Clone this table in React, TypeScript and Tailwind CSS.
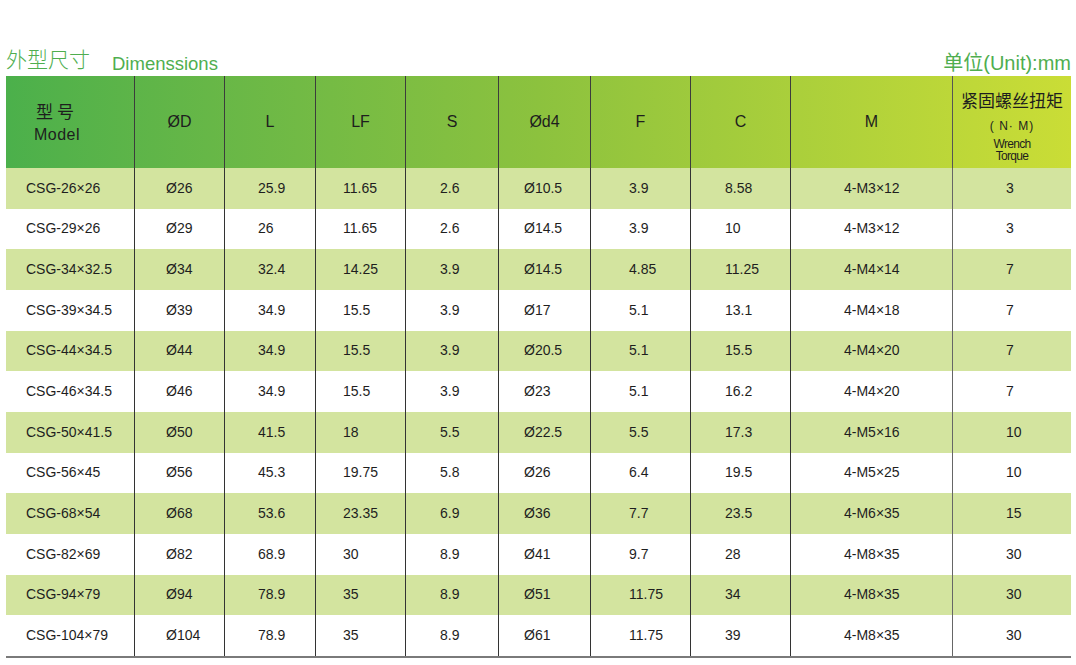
const cols = "grid grid-cols-[128px_90px_91px_90px_93px_92px_100px_100px_162px_119px]";

const pads = [
  "pl-[20px]",
  "pl-[31px]",
  "pl-[33px]",
  "pl-[27px]",
  "pl-[34px]",
  "pl-[25px]",
  "pl-[38px]",
  "pl-[34px]",
  "pl-[53px]",
  "pl-[53px]",
];

const rows: string[][] = [
  ["CSG-26×26", "Ø26", "25.9", "11.65", "2.6", "Ø10.5", "3.9", "8.58", "4-M3×12", "3"],
  ["CSG-29×26", "Ø29", "26", "11.65", "2.6", "Ø14.5", "3.9", "10", "4-M3×12", "3"],
  ["CSG-34×32.5", "Ø34", "32.4", "14.25", "3.9", "Ø14.5", "4.85", "11.25", "4-M4×14", "7"],
  ["CSG-39×34.5", "Ø39", "34.9", "15.5", "3.9", "Ø17", "5.1", "13.1", "4-M4×18", "7"],
  ["CSG-44×34.5", "Ø44", "34.9", "15.5", "3.9", "Ø20.5", "5.1", "15.5", "4-M4×20", "7"],
  ["CSG-46×34.5", "Ø46", "34.9", "15.5", "3.9", "Ø23", "5.1", "16.2", "4-M4×20", "7"],
  ["CSG-50×41.5", "Ø50", "41.5", "18", "5.5", "Ø22.5", "5.5", "17.3", "4-M5×16", "10"],
  ["CSG-56×45", "Ø56", "45.3", "19.75", "5.8", "Ø26", "6.4", "19.5", "4-M5×25", "10"],
  ["CSG-68×54", "Ø68", "53.6", "23.35", "6.9", "Ø36", "7.7", "23.5", "4-M6×35", "15"],
  ["CSG-82×69", "Ø82", "68.9", "30", "8.9", "Ø41", "9.7", "28", "4-M8×35", "30"],
  ["CSG-94×79", "Ø94", "78.9", "35", "8.9", "Ø51", "11.75", "34", "4-M8×35", "30"],
  ["CSG-104×79", "Ø104", "78.9", "35", "8.9", "Ø61", "11.75", "39", "4-M8×35", "30"],
];

const heads = ["ØD", "L", "LF", "S", "Ød4", "F", "C", "M"];

const sans = "font-['Liberation_Sans','Noto_Sans_CJK_SC',sans-serif]";

export default function App() {
  return (
    <div className={`w-[1076px] h-[665px] bg-white ${sans} text-[#1e1e1e] overflow-hidden`}>
      <div className="mx-[6px] w-[1065px] pt-[44px]">
        {/* title line */}
        <div className="flex items-end justify-between h-[32px] text-[#4fae4f]">
          <div className="flex items-end">
            <span className="text-[21px] leading-none mb-[6px] font-light">外型尺寸</span>
            <span className="ml-[22px] text-[18.5px] leading-none mb-[3px]">Dimenssions</span>
          </div>
          <span className="text-[20px] leading-none mb-[3px]">单位(Unit):mm</span>
        </div>

        {/* header */}
        <div className={`${cols} h-[92px] bg-gradient-to-r from-[#4bb04b] via-[#8cc23e] to-[#cadd36]`}>
          <div className="flex flex-col items-center justify-center pr-[26px] pt-[4px]">
            <span className="text-[17px] leading-[22px] tracking-[4px]">型号</span>
            <span className="text-[16px] leading-[22px] tracking-[0.5px]">Model</span>
          </div>
          {heads.map((h) => (
            <div key={h} className="flex items-center justify-center border-l border-[#3c3c3c] text-[16px]">
              {h}
            </div>
          ))}
          <div className="flex flex-col items-center justify-start pt-[16px] border-l border-[#555]">
            <span className="text-[17px] leading-[20px]">紧固螺丝扭矩</span>
            <span className="text-[12px] leading-[14px] mt-[7px] tracking-[1px]">( N· M)</span>
            <span className="text-[12px] leading-[11px] tracking-[-0.7px] mt-[6px]">Wrench</span>
            <span className="text-[12px] leading-[12px] tracking-[-0.7px]">Torque</span>
          </div>
        </div>

        {/* body */}
        {rows.map((r, i) => (
          <div key={i} className={`${cols} h-[40.67px] ${i % 2 === 0 ? "bg-[#d3e49f]" : "bg-white"}`}>
            {r.map((c, j) => (
              <div
                key={j}
                className={`flex items-center text-[14px] ${pads[j]} ${j > 0 ? "border-l" : ""} ${j === 9 ? "border-[#666]" : "border-[#333]"}`}
              >
                {c}
              </div>
            ))}
          </div>
        ))}
        <div className="h-[2px] bg-[#7a7a7a]" />
      </div>
    </div>
  );
}
